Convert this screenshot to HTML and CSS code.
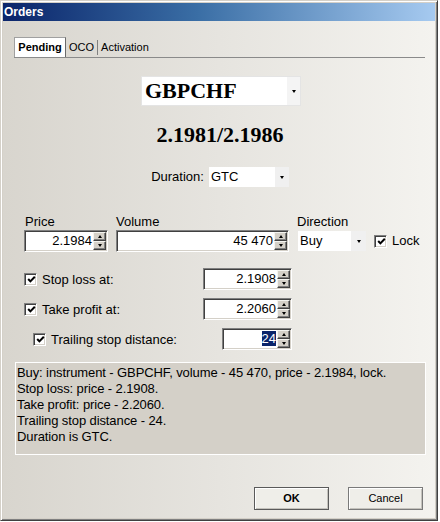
FILE: index.html
```html
<!DOCTYPE html>
<html>
<head>
<meta charset="utf-8">
<link rel="stylesheet" href="styles.css">
</head>
<body>
<div class="window">
  <div class="titlebar">Orders</div>
  <div class="client">
    <div class="tabs">
      <div class="tab active">Pending</div>
      <div class="tab">OCO</div>
      <div class="tab-sep"></div>
      <div class="tab">Activation</div>
    </div>

    <div class="combo instrument">
      <div class="combo-text">GBPCHF</div>
      <div class="combo-arrow"><span class="tri-down"></span></div>
    </div>

    <div class="quote">2.1981/2.1986</div>

    <div class="duration-row">
      <span class="label">Duration:</span>
      <div class="combo duration">
        <div class="combo-text">GTC</div>
        <div class="combo-arrow"><span class="tri-down"></span></div>
      </div>
    </div>

    <div class="order-grid">
      <div class="label price-label">Price</div>
      <div class="label">Volume</div>
      <div class="label">Direction</div>
      <div></div>

      <div class="spin price-input">
        <div class="spin-value">2.1984</div>
        <div class="spin-btns"><div class="spin-btn"><span class="tri-up"></span></div><div class="spin-btn"><span class="tri-down"></span></div></div>
      </div>
      <div class="spin volume-input">
        <div class="spin-value">45 470</div>
        <div class="spin-btns"><div class="spin-btn"><span class="tri-up"></span></div><div class="spin-btn"><span class="tri-down"></span></div></div>
      </div>
      <div class="combo direction">
        <div class="combo-text">Buy</div>
        <div class="combo-arrow"><span class="tri-down"></span></div>
      </div>
      <div class="check-item">
        <span class="checkbox"><svg width="9" height="9" viewBox="0 0 9 9"><polyline points="1.2,4 3.4,6.4 7.8,1.8" fill="none" stroke="#000" stroke-width="2"/></svg></span>
        <span class="label">Lock</span>
      </div>
    </div>

    <div class="checks">
      <div class="check-row">
        <div class="check-item">
          <span class="checkbox"><svg width="9" height="9" viewBox="0 0 9 9"><polyline points="1.2,4 3.4,6.4 7.8,1.8" fill="none" stroke="#000" stroke-width="2"/></svg></span>
          <span class="label">Stop loss at:</span>
        </div>
        <div class="spin sl-input">
          <div class="spin-value">2.1908</div>
          <div class="spin-btns"><div class="spin-btn"><span class="tri-up"></span></div><div class="spin-btn"><span class="tri-down"></span></div></div>
        </div>
      </div>
      <div class="check-row">
        <div class="check-item">
          <span class="checkbox"><svg width="9" height="9" viewBox="0 0 9 9"><polyline points="1.2,4 3.4,6.4 7.8,1.8" fill="none" stroke="#000" stroke-width="2"/></svg></span>
          <span class="label">Take profit at:</span>
        </div>
        <div class="spin sl-input">
          <div class="spin-value">2.2060</div>
          <div class="spin-btns"><div class="spin-btn"><span class="tri-up"></span></div><div class="spin-btn"><span class="tri-down"></span></div></div>
        </div>
      </div>
      <div class="check-row trailing">
        <div class="check-item">
          <span class="checkbox"><svg width="9" height="9" viewBox="0 0 9 9"><polyline points="1.2,4 3.4,6.4 7.8,1.8" fill="none" stroke="#000" stroke-width="2"/></svg></span>
          <span class="label">Trailing stop distance:</span>
        </div>
        <div class="spin ts-input">
          <div class="spin-value"><span class="selected">24</span></div>
          <div class="spin-btns"><div class="spin-btn"><span class="tri-up"></span></div><div class="spin-btn"><span class="tri-down"></span></div></div>
        </div>
      </div>
    </div>

    <div class="summary">
      <div>Buy: instrument - GBPCHF, volume - 45 470, price - 2.1984, lock.</div>
      <div>Stop loss: price - 2.1908.</div>
      <div>Take profit: price - 2.2060.</div>
      <div>Trailing stop distance - 24.</div>
      <div>Duration is GTC.</div>
    </div>

    <div class="buttons">
      <div class="btn default">OK</div>
      <div class="btn">Cancel</div>
    </div>
  </div>
</div>
</body>
</html>
```

FILE: styles.css
```css
html, body {
  margin: 0;
  padding: 0;
  background: #ffffff;
}

body {
  width: 440px;
  height: 522px;
  overflow: hidden;
  font-family: "Liberation Sans", Arial, sans-serif;
  color: #000;
}

.window {
  width: 438px;
  height: 521px;
  box-sizing: border-box;
  border: 1px solid;
  border-color: #d4d0c8 #404040 #404040 #d4d0c8;
  box-shadow: inset 1px 1px #ffffff, inset -1px -1px #808080;
  padding: 2px;
  background: #d4d0c8;
  display: flex;
  flex-direction: column;
}

.titlebar {
  height: 18px;
  line-height: 18px;
  padding-left: 1px;
  background: linear-gradient(to right, #0a246a 0%, #3a6ea5 45%, #a6caf0 100%);
  color: #fff;
  font-weight: bold;
  font-size: 12px;
}

.client {
  flex: 1;
  background: linear-gradient(to right, #d8d5ce 0%, #e6e4df 50%, #f4f3ef 100%);
  display: flex;
  flex-direction: column;
}

.label {
  font-size: 13px;
  line-height: 16px;
  white-space: nowrap;
}

/* Tabs */
.tabs {
  margin: 16px 0 0 11px;
  width: 411px;
  height: 20px;
  border-bottom: 1px solid #8a8a8a;
  display: flex;
  align-items: flex-end;
  font-size: 11px;
}

.tab {
  height: 20px;
  line-height: 20px;
  padding: 0 3px;
  white-space: nowrap;
}

.tab.active {
  width: 52px;
  box-sizing: border-box;
  padding: 0;
  text-align: center;
  background: #ffffff;
  font-weight: bold;
  border: 1px solid #a0a0a0;
  border-right-color: #6a6a6a;
  border-bottom: none;
  line-height: 19px;
}

.tab-sep {
  width: 1px;
  height: 15px;
  margin-bottom: 2px;
  background: #808080;
}

/* Combos */
.combo {
  display: flex;
  background: #ffffff;
  box-sizing: border-box;
}

.combo-text {
  flex: 1;
  padding-left: 2px;
  white-space: nowrap;
}

.combo-arrow {
  width: 14px;
  background: #f0f0f0;
  display: flex;
  align-items: center;
  justify-content: center;
}

.tri-down {
  width: 0;
  height: 0;
  border-left: 2.5px solid transparent;
  border-right: 2.5px solid transparent;
  border-top: 3px solid #000;
}

.tri-up {
  width: 0;
  height: 0;
  border-left: 2.5px solid transparent;
  border-right: 2.5px solid transparent;
  border-bottom: 3px solid #000;
}

.instrument {
  margin: 18px 0 0 138px;
  width: 160px;
  height: 30px;
  border: 1px solid #e4e4e4;
}

.instrument .combo-text {
  font-family: "Liberation Serif", "Times New Roman", serif;
  font-weight: bold;
  font-size: 22px;
  line-height: 28px;
  padding-left: 3px;
}

.instrument .combo-arrow {
  width: 13px;
  background: #f4f4f4;
}

.quote {
  margin-top: 16px;
  height: 26px;
  line-height: 26px;
  text-align: center;
  padding-left: 2px;
  font-family: "Liberation Serif", "Times New Roman", serif;
  font-weight: bold;
  font-size: 22px;
}

.duration-row {
  margin-top: 19px;
  height: 20px;
  display: flex;
  justify-content: center;
  align-items: center;
  gap: 5px;
  padding-left: 2px;
}

.duration {
  width: 80px;
  height: 20px;
}

.duration .combo-text,
.direction .combo-text {
  font-size: 13px;
  line-height: 20px;
}

/* Order grid */
.order-grid {
  margin: 27px 0 0 21px;
  display: grid;
  grid-template-columns: 84px 173px 69px auto;
  grid-template-rows: 16px 22px;
  column-gap: 8px;
  align-items: center;
}

.price-label {
  padding-left: 1px;
}

.order-grid .volume-input {
  width: 173px;
}

.direction {
  margin-left: 1px;
  height: 20px;
}

.direction .combo-arrow {
  width: 15px;
}

/* Spin boxes */
.spin {
  height: 22px;
  box-sizing: border-box;
  background: #fff;
  border-top: 1px solid #808080;
  border-left: 1px solid #808080;
  border-bottom: 1px solid #ffffff;
  border-right: 1px solid #ffffff;
  box-shadow: inset 1px 1px #404040, inset -1px -1px #d4d0c8;
  padding: 1px;
  display: flex;
}

.spin-value {
  flex: 1;
  text-align: right;
  font-size: 13px;
  line-height: 18px;
  padding-right: 1px;
  white-space: nowrap;
}

.selected {
  background: #0a246a;
  color: #fff;
}

.spin-btns {
  width: 13px;
  display: flex;
  flex-direction: column;
}

.spin-btn {
  flex: 1;
  box-sizing: border-box;
  background: #d4d0c8;
  border-top: 1px solid #f4f4f0;
  border-left: 1px solid #f4f4f0;
  border-right: 1px solid #404040;
  border-bottom: 1px solid #404040;
  box-shadow: inset -1px -1px #808080;
  display: flex;
  align-items: center;
  justify-content: center;
}

.price-input {
  width: 84px;
}

/* Checkboxes */
.check-item {
  display: flex;
  align-items: center;
  gap: 5px;
}

.checkbox {
  width: 13px;
  height: 13px;
  box-sizing: border-box;
  background: #fff;
  border-top: 1px solid #808080;
  border-left: 1px solid #808080;
  border-bottom: 1px solid #ffffff;
  border-right: 1px solid #ffffff;
  box-shadow: inset 1px 1px #404040, inset -1px -1px #d4d0c8;
  display: flex;
  align-items: center;
  justify-content: center;
  flex: none;
}

.checkbox svg {
  display: block;
  margin: 1px 0 0 1px;
}

.checks {
  margin: 16px 0 0 21px;
  width: 268px;
  display: flex;
  flex-direction: column;
  gap: 8px;
}

.check-row {
  height: 22px;
  display: flex;
  justify-content: space-between;
  align-items: center;
}

.check-row .label {
  line-height: 22px;
  padding-top: 2px;
}

.check-row.trailing {
  padding-left: 9px;
}

.sl-input {
  width: 89px;
}

.ts-input {
  width: 70px;
}

/* Summary */
.summary {
  margin: 12px 0 0 12px;
  width: 411px;
  height: 93px;
  box-sizing: border-box;
  background: #d4d0c8;
  border: 1px solid #ffffff;
  padding: 2px 2px 2px 1px;
  font-size: 13px;
  letter-spacing: -0.1px;
  line-height: 16px;
  white-space: nowrap;
}

/* Buttons */
.buttons {
  margin-top: 32px;
  padding-right: 12px;
  display: flex;
  justify-content: flex-end;
  gap: 19px;
}

.btn {
  width: 75px;
  height: 23px;
  box-sizing: border-box;
  border: 1px solid #7a7a7a;
  background: #efeee9;
  box-shadow: inset 1px 1px #ffffff, inset -1px -1px #c4c2bc;
  font-size: 11px;
  line-height: 21px;
  text-align: center;
}

.btn.default {
  font-weight: bold;
  border-color: #5a5a5a;
}
```
